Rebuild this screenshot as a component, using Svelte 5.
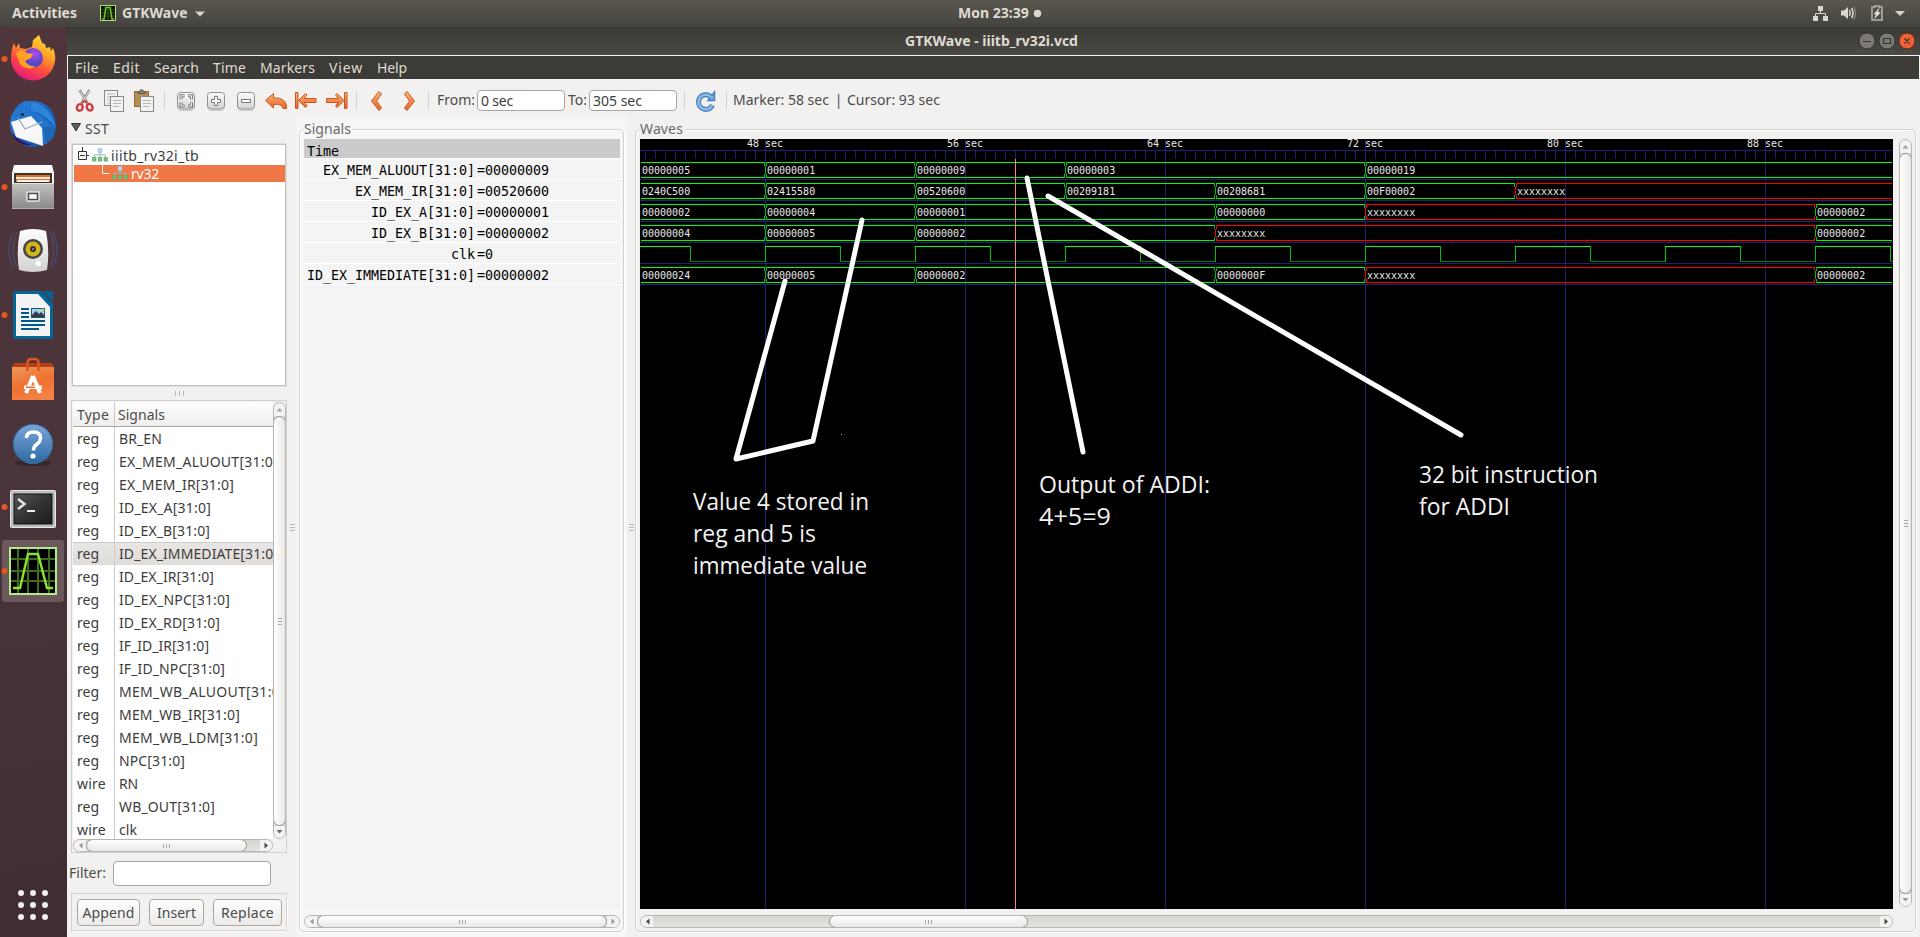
<script>
  function fit(node, width) {
    const natural = node.getBoundingClientRect().width;
    const n = Math.max(1, node.textContent.length);
    node.style.letterSpacing = (width - natural) / n + 'px';
  }

  const menus = [['File', 24], ['Edit', 27], ['Search', 45], ['Time', 33], ['Markers', 55], ['View', 34], ['Help', 30]];

  const rows = [
    ['reg', 'BR_EN', 43], ['reg', 'EX_MEM_ALUOUT[31:0]', 159], ['reg', 'EX_MEM_IR[31:0]', 115],
    ['reg', 'ID_EX_A[31:0]', 92], ['reg', 'ID_EX_B[31:0]', 91], ['reg', 'ID_EX_IMMEDIATE[31:0]', 159],
    ['reg', 'ID_EX_IR[31:0]', 95], ['reg', 'ID_EX_NPC[31:0]', 111], ['reg', 'ID_EX_RD[31:0]', 101],
    ['reg', 'IF_ID_IR[31:0]', 90], ['reg', 'IF_ID_NPC[31:0]', 106], ['reg', 'MEM_WB_ALUOUT[31:0]', 166],
    ['reg', 'MEM_WB_IR[31:0]', 121], ['reg', 'MEM_WB_LDM[31:0]', 139], ['reg', 'NPC[31:0]', 66],
    ['wire', 'RN', 19], ['reg', 'WB_OUT[31:0]', 96], ['wire', 'clk', 18]
  ];

  const signals = [
    ['EX_MEM_ALUOUT[31:0]', '00000009'], ['EX_MEM_IR[31:0]', '00520600'], ['ID_EX_A[31:0]', '00000001'],
    ['ID_EX_B[31:0]', '00000002'], ['clk', '0'], ['ID_EX_IMMEDIATE[31:0]', '00000002']
  ];

  // Each bus: top of its lane and [start, value] pairs.
  const X = 'xxxxxxxx';
  const buses = [
    { y: 162, v: [[640, '00000005'], [765, '00000001'], [915, '00000009'], [1065, '00000003'], [1365, '00000019']] },
    { y: 183, v: [[640, '0240C500'], [765, '02415580'], [915, '00520600'], [1065, '00209181'], [1215, '00208681'], [1365, '00F00002'], [1515, X]] },
    { y: 204, v: [[640, '00000002'], [765, '00000004'], [915, '00000001'], [1215, '00000000'], [1365, X], [1815, '00000002']] },
    { y: 225, v: [[640, '00000004'], [765, '00000005'], [915, '00000002'], [1215, X], [1815, '00000002']] },
    { y: 267, v: [[640, '00000024'], [765, '00000005'], [915, '00000002'], [1215, '0000000F'], [1365, X], [1815, '00000002']] }
  ];
  const segs = buses.flatMap((b) =>
    b.v.map(([x, t], i) => ({
      x, t, y: b.y, first: i === 0, last: i === b.v.length - 1,
      end: i === b.v.length - 1 ? 1892 : b.v[i + 1][0] - 1,
      c: t === X ? '#ff0000' : '#00ff00', d: t === X ? '#ff0000' : '#00c000'
    }))
  );
  const ticks = Array.from({ length: 125 }, (_, i) => 645 + i * 10);
  const majors = [[765, 48], [965, 56], [1165, 64], [1365, 72], [1565, 80], [1765, 88]];
  const edges = Array.from({ length: 17 }, (_, i) => 690 + i * 75);
  const notes = [
    [693, 510, 176, 'Value 4 stored in'], [693, 542, 123, 'reg and 5 is'], [693, 574, 174, 'immediate value'],
    [1039, 493, 171, 'Output of ADDI:'], [1039, 525, 72, '4+5=9'],
    [1419, 483, 179, '32 bit instruction'], [1419, 515, 91, 'for ADDI']
  ];
</script>

{#snippet hbar(start, size, total, la, ra)}
  <div class="hbar" style:width="{total}px">
    <svg class="arr" width="12" height="13"><path d="M8.5 3.5v6L5 6.5z" fill={la} /></svg>
    <div class="thumb" style:margin-left="{start - 13}px" style:width="{size}px"><i></i><i></i><i></i></div>
    <svg class="arr end" width="12" height="13"><path d="M4.500 3.500v6l3.500-3z" fill={ra} /></svg>
  </div>
{/snippet}

{#snippet vbar(size, total, da)}
  <div class="vbar" style:height="{total}px">
    <svg class="arr" width="11" height="13"><path d="M2.5 8.5h6L5.500 5z" fill="#a5a3a0" /></svg>
    <div class="vthumb" style:height="{size}px"><i></i><i></i><i></i></div>
    <svg class="arr end" width="11" height="12"><path d="M2.500 4h6L5.500 7.500z" fill={da} /></svg>
  </div>
{/snippet}

{#snippet hier()}
  <svg width="16" height="14" viewBox="0 0 16 14">
    <path d="M8 4v3M2.500 9V6.800h11V9M8 7v2" fill="none" stroke="#a9b5bd" />
    <rect x="6" y="0.500" width="4" height="4" fill="#b9d7f6" stroke="#93bae2" stroke-width=".6" />
    <g fill="#74c077" stroke="#57ab5b" stroke-width=".6"><rect x=".4" y="9.500" width="3.600" height="3.600" /><rect x="6.200" y="9.500" width="3.600" height="3.600" /><rect x="12" y="9.500" width="3.600" height="3.600" /></g>
  </svg>
{/snippet}

<div class="screen">
  <svg class="defs" width="0" height="0">
    <defs>
      <linearGradient id="or" x1="0" y1="0" x2="0" y2="1"><stop offset="0" stop-color="#f9b873" /><stop offset="1" stop-color="#e8622a" /></linearGradient>
      <linearGradient id="ff" x1=".8" y1="0" x2=".3" y2="1"><stop offset="0" stop-color="#ffe23c" /><stop offset=".35" stop-color="#ffa526" /><stop offset=".65" stop-color="#ff4f3c" /><stop offset="1" stop-color="#e5157f" /></linearGradient>
      <radialGradient id="pu" cx=".6" cy=".3"><stop offset="0" stop-color="#b04df0" /><stop offset="1" stop-color="#5546c4" /></radialGradient>
      <linearGradient id="tb" x1="0" y1="0" x2="1" y2="1"><stop offset="0" stop-color="#2f8fe0" /><stop offset=".5" stop-color="#1d5fc0" /><stop offset="1" stop-color="#164c95" /></linearGradient>
      <linearGradient id="gr" x1="0" y1="0" x2="0" y2="1"><stop offset="0" stop-color="#c2c2c0" /><stop offset="1" stop-color="#8a8a88" /></linearGradient>
      <linearGradient id="wh" x1="0" y1="0" x2="0" y2="1"><stop offset="0" stop-color="#fdfdfd" /><stop offset="1" stop-color="#d3d2d0" /></linearGradient>
      <linearGradient id="bag" x1="0" y1="0" x2=".4" y2="1"><stop offset="0" stop-color="#e9985a" /><stop offset=".6" stop-color="#f0702f" /><stop offset="1" stop-color="#f38145" /></linearGradient>
      <linearGradient id="hp" x1="0" y1="0" x2="0" y2="1"><stop offset="0" stop-color="#7ba5dd" /><stop offset="1" stop-color="#2c6aa0" /></linearGradient>
      <linearGradient id="tm" x1="0" y1="0" x2="1" y2="1"><stop offset="0" stop-color="#555" /><stop offset=".5" stop-color="#333" /><stop offset="1" stop-color="#1c1c1c" /></linearGradient>
    </defs>
  </svg>

  <header class="top">
    <b class="act" use:fit={68}>Activities</b>
    <svg class="mini" width="16" height="16" viewBox="0 0 16 16"><rect x=".5" y=".5" width="15" height="15" fill="#0c1204" stroke="#a5dd78" /><path d="M5 1v14M8 1v14M11 1v14M1 5h14M1 8h14M1 11h14" stroke="#33591a" /><path d="M2 14h2L6 2.500h4L12 14h2" fill="none" stroke="#74c42c" stroke-width="1.400" /></svg>
    <b class="app" use:fit={67}>GTKWave</b>
    <svg class="dn" width="10" height="6"><path d="M0 .5h10L5 5.500z" fill="#d5d3cd" /></svg>
    <b class="clock" use:fit={73}>Mon 23:39</b>
    <svg width="9" height="9" class="dot"><circle cx="4.500" cy="4.500" r="3.700" fill="#dbd9d4" /></svg>
    <svg class="tray" width="100" height="27" viewBox="1810 0 100 27">
      <path d="M1818 6h5v5h-5zM1813 16h5v5h-5zM1823 16h5v5h-5z" fill="#d9d7d2" /><path d="M1820.500 11v2.500M1815.500 16v-2.500h10V16" fill="none" stroke="#d9d7d2" />
      <path d="M1841 10.500h3l4-3.500v12l-4-3.500h-3z" fill="#d9d7d2" /><path d="M1849.500 10q1.500 3 0 6M1851.500 8q3 5 0 10" fill="none" stroke="#d9d7d2" stroke-width="1.500" /><path d="M1853.500 6.500q4 6.500 0 13" fill="none" stroke="#85827a" stroke-width="1.300" />
      <path d="M1872 7h3V6h4v1h3v13h-10z" fill="none" stroke="#9c9a94" stroke-width="2" /><path d="M1879 8.500l-5 5.500h2.500l-2 4.500 6-6h-3z" fill="#e2e0db" stroke="#e2e0db" stroke-width=".6" />
      <path d="M1895 11h10l-5 5z" fill="#d5d3cd" />
    </svg>
  </header>

  <nav class="dock">
    <svg viewBox="0 0 67 64"><circle cx="4.500" cy="32" r="3" fill="#e95420" />
      <path d="M14 16l2 5 3-5 1 5 6 1 6-2 1-7 6-5 3 8 3 1 1 4 4-1 1 4 2-3q4 9 1 17A22 22 0 0 1 11 32Q11 22 14 16z" fill="url(#ff)" />
      <circle cx="33" cy="31" r="10" fill="url(#pu)" /><path d="M16 26q6-4 11 0l6 1-2 4-6 3q3 6 11 5-8 6-16-2z" fill="#ffa127" /></svg>
    <svg viewBox="0 0 67 64"><circle cx="33" cy="33" r="23" fill="url(#tb)" />
      <path d="M13 22Q20 8 30 10q-9 3-8 11 20-2 33 18-2 12-12 15L20 46z" fill="#2476cc" /><path d="M32 11q20 4 24 27-9-15-26-19z" fill="#2c86d8" />
      <path d="M11 31l20-6 11 12 1 18-27-9z" fill="#f7f7f8" /><path d="M18 27l7 11 17-7" fill="none" stroke="#9eabc0" stroke-width="1.300" /><path d="M43 36l3 17 8-7 2-10z" fill="#1c67b6" /><path d="M12 42q7 9 20 12-16 1-20-12z" fill="#29125c" /><circle cx="22.500" cy="23.500" r="1.500" fill="#123" /></svg>
    <svg viewBox="0 0 67 64"><circle cx="4.500" cy="32" r="3" fill="#e95420" />
      <path d="M14 10h38l2 8v36H12V18z" fill="url(#wh)" /><path d="M14 18h38v10H14z" fill="#3b3532" /><path d="M16 20h34v7H16z" fill="#e46b21" /><path d="M16 22h34v2H16zM17 25h32v2H17z" fill="#f6efe6" /><rect x="12" y="28" width="42" height="25.500" rx="1" fill="url(#gr)" /><path d="M12 28.500h42" stroke="#e2e2e2" /><rect x="26" y="36" width="14" height="11" rx="2" fill="#d8d8d6" /><rect x="28.500" y="38.500" width="9" height="6" fill="#fafafa" stroke="#4d4d4d" stroke-width="1.500" /></svg>
    <svg viewBox="0 0 67 64"><path d="M13 13Q5 32 13 48M17 13Q9 32 17 48M53 13Q61 32 53 48M50 12Q57 32 50 48" fill="none" stroke="#48496e" stroke-width="1.400" />
      <path d="M20 12q13-4 26 0 4 20 1 39-14 4-28 0-3-20 1-39z" fill="url(#wh)" /><circle cx="33" cy="30" r="10" fill="#45454a" /><circle cx="33" cy="30" r="7.500" fill="#d5b516" /><circle cx="33" cy="30" r="3" fill="#343438" /><circle cx="33" cy="30" r="1" fill="#999" /><circle cx="39" cy="45" r="3.500" fill="#c9c8c5" /><circle cx="38.500" cy="44.500" r="3" fill="#fff" /></svg>
    <svg viewBox="0 0 67 64"><circle cx="4.500" cy="32" r="3" fill="#e95420" />
      <path d="M15 8h26l12 13v33a2 2 0 0 1-2 2H15a2 2 0 0 1-2-2V10a2 2 0 0 1 2-2z" fill="#05669a" /><path d="M42 8h11v11z" fill="#0b5f92" /><path d="M16 11h22l12 13v29H16z" fill="#f3f3f3" /><path d="M21 27h8M21 31h8M21 35h8M21 39h24M21 43h24M21 47h18" transform="translate(0 -1)" stroke="#04568a" stroke-width="2" /><rect x="31.500" y="25.500" width="13" height="9" fill="#a6d0ee" stroke="#075b8c" /><path d="M32 34v-2l4-4 3 3 2-2 3 3v2z" fill="#383d42" /><circle cx="43" cy="27" r="1.500" fill="#ebc64b" /></svg>
    <svg viewBox="0 0 67 64"><path d="M14 16h38l2 5H12z" fill="#b73e12" /><path d="M12 20h42v33H12z" fill="url(#bag)" /><path d="M27.500 24v-8q0-4 4-4h3q4 0 4 4v8" fill="none" stroke="#e4551e" stroke-width="2.500" />
      <path d="M33 29l-7 17M33 29l7 17" stroke="#fff" stroke-width="4" /><path d="M24 38.500h18v3.500H24z" fill="#fff" /><path d="M26 40.200h9" stroke="#e85b23" stroke-width="1.300" /></svg>
    <svg viewBox="0 0 67 64"><ellipse cx="33" cy="52" rx="18" ry="3" fill="#35262b" /><circle cx="33" cy="33" r="19.700" fill="url(#hp)" stroke="#34699a" /><path d="M26.500 27q0-6 7-6t7 6q0 4-4 6.500-3 2-3 6" fill="none" stroke="#fff" stroke-width="3.400" /><circle cx="33" cy="45" r="2.600" fill="#fff" /></svg>
    <svg viewBox="0 0 67 64"><circle cx="4.500" cy="32" r="3" fill="#e95420" /><rect x="10.500" y="15.500" width="45" height="37" rx="1" fill="#bdbdbb" stroke="#e8e8e8" /><rect x="14" y="19" width="38" height="30" fill="url(#tm)" stroke="#101010" /><path d="M18 24l6.500 5-6.500 5" fill="none" stroke="#e4e4e4" stroke-width="2.400" /><path d="M27 36h8" stroke="#f0f0f0" stroke-width="2" /></svg>
    <svg viewBox="0 0 67 64"><rect x="2" y="1" width="62" height="62" rx="3" fill="#6b585d" /><circle cx="4.500" cy="32" r="3" fill="#e95420" /><rect x="10" y="9" width="46" height="46" fill="#000" stroke="#b5e986" stroke-width="2" /><path d="M18 10v44M28 10v44M38 10v44M49 10v44M11 20h44M11 32h44M11 42h44" stroke="#3f6b1d" stroke-width="2" /><path d="M13 49h7l8-34h10l9 34h6" fill="none" stroke="#8ae234" stroke-width="2.400" /></svg>
    <svg class="apps" viewBox="0 0 67 64" fill="#f2f1f0">
      {#each [21, 33, 45] as x}{#each [20, 32, 44] as y}<circle cx={x} cy={y} r="3" />{/each}{/each}
    </svg>
  </nav>

  <main class="win">
    <div class="title">
      <b use:fit={176}>GTKWave - iiitb_rv32i.vcd</b>
      <svg class="wbtn" width="60" height="20" viewBox="0 0 60 20">
        <circle cx="10" cy="10" r="8" fill="#7c7a73" stroke="#33322e" /><circle cx="30" cy="10" r="8" fill="#7c7a73" stroke="#33322e" /><circle cx="50" cy="10" r="8" fill="#ee6137" stroke="#58281a" />
        <path d="M6 10.500h8M26.500 7.500h7v5h-7zM47.500 7.500l5 5M52.500 7.500l-5 5" fill="none" stroke="#33322e" stroke-width="1.200" />
      </svg>
    </div>
    <div class="menu">{#each menus as [m, w]}<span use:fit={w}>{m}</span>{/each}</div>

    <div class="tools">
      <svg width="368" height="39" viewBox="67 79 368 39" fill="none">
        <path d="M79.500 90l8 13M89.500 90l-8 13" stroke="#8d8d8a" stroke-width="2.600" /><path d="M79.500 90.500l7.500 12M89.500 90.500l-7.500 12" stroke="#e3e3e0" stroke-width="1" /><ellipse cx="80" cy="107.500" rx="2.800" ry="3.400" stroke="#cc3c3c" stroke-width="2.400" transform="rotate(25 80 107)" /><ellipse cx="89.500" cy="107.500" rx="2.800" ry="3.400" stroke="#cc3c3c" stroke-width="2.400" transform="rotate(-25 89 107)" /><path d="M82 103l2.500-2 2.500 2" stroke="#cc3c3c" stroke-width="2" />
        <g stroke="#888a85"><rect x="104.500" y="90.500" width="13" height="15" fill="#f2f2f0" /><path d="M107 94h8M107 97h6M107 100h3M107 103h3" stroke="#b5b6b2" /><rect x="110.500" y="96.500" width="13" height="15" fill="#f2f2f0" /><path d="M113 100.500h8M113 103.500h8M113 106.500h6" stroke="#b5b6b2" /></g>
        <rect x="134.500" y="91.500" width="14" height="15" fill="#b38d52" stroke="#8e6c3b" /><path d="M138 93.500v-1.500h2v-2h3v2h2v1.500z" fill="#888" stroke="#5c5c58" /><g stroke="#888a85"><rect x="140.500" y="96.500" width="13" height="15" fill="#f2f2f0" /><path d="M143 100.500h8M143 103.500h8M143 106.500h6" stroke="#b5b6b2" /></g>
        <path d="M164.500 91v19M356.500 91v19M428.500 91v19" stroke="#d6d4d0" />
        {#each [177, 207, 237] as x}<rect x={x + 0.5} y="92.500" width="17" height="16.500" rx="3" fill="url(#wh)" stroke="#8f918c" /><path d="M{x + 2} 110.500h14" stroke="#c9c8c5" />{/each}
        <path d="M184.500 95.800h-3.500v3.500M188 95.800h3.500v3.500M184.500 106h-3.500v-3.500M188 106h3.500v-3.500" stroke="#777975" stroke-width="3" /><path d="M184 95.800h-3v3M188.500 95.800h3v3M184 106h-3v-3M188.500 106h3v-3" stroke="#fff" stroke-width="1" />
        <path d="M214.500 96.500h3v3h3v3h-3v3h-3v-3h-3v-3h3zM241.500 99.500h9v3h-9z" fill="#fff" stroke="#777975" />
        <g fill="url(#or)" stroke="#cf5520" stroke-linejoin="round"><path d="M265.500 100.500l8-7v4.500q11-1 13 7.500v3h-3.500q-1-5-9.500-4v3.500z" />
          <path d="M295.500 92.500h2.500v16h-2.500zM298.500 100.500l7-7 1.500 1.500-3 3.500h12v4h-12l3 3-1.500 2z" /><path d="M346.500 92.500h-2.500v16h2.500zM343.500 100.500l-7-7-1.500 1.500 3 3.500h-12v4h12l-3 3 1.500 2z" transform="translate(.5 0)" />
          <path d="M379 91.500l2.500 2.500-5 7 5 7-2.500 2.500-7.500-9.500z" /><path d="M407 91.500l-2.500 2.500 5 7-5 7 2.500 2.500 7.500-9.500z" /></g>
      </svg>
      <span class="from" use:fit={39}>From:</span>
      <div class="entry e1"><span use:fit={32}>0 sec</span></div>
      <span class="to" use:fit={19}>To:</span>
      <div class="entry e2"><span use:fit={49}>305 sec</span></div>
      <svg width="55" height="39" viewBox="678 79 55 39" fill="none"><path d="M684.500 91v19M726.500 91v19" stroke="#d6d4d0" /><path d="M711.500 97.500a7.300 7.300 0 1 0 1 7.500" stroke="#4480bd" stroke-width="5" /><path d="M708 100.500h6.500v-8.500z" fill="#75a8da" stroke="#4480bd" stroke-width="1.500" /><path d="M711.500 97.500a7.300 7.300 0 1 0 1 7.500" stroke="#8dbae6" stroke-width="2.600" /></svg>
      <span class="mk1" use:fit={97}>Marker: 58 sec</span><span class="bar">|</span><span use:fit={93}>Cursor: 93 sec</span>
    </div>

    <div class="body">
      <section class="left">
        <div class="sst"><svg width="12" height="25"><path d="M0.500 5.500h9L5 13z" fill="#606060" stroke="#33332f" /></svg><span use:fit={24}>SST</span></div>
        <div class="tree">
          <div class="node"><svg width="15" height="19" viewBox="74 146 15 19" fill="none"><path d="M82.500 147v4M78.500 151.500h8v8h-8zM80 155.500h5M87 155.500h2" stroke="#333" /></svg><span class="ic">{@render hier()}</span><span use:fit={88}>iiitb_rv32i_tb</span></div>
          <div class="node sel"><svg width="15" height="17" viewBox="0 0 15 17" fill="none"><path d="M8.500 0v8.500H15" stroke="#fff" /></svg><span class="ic2">{@render hier()}</span><span use:fit={28}>rv32</span></div>
        </div>
        <div class="grip"><i></i><i></i><i></i></div>
        <div class="table">
          <div class="grid">
            <div class="hd"><span class="c1"><span use:fit={32}>Type</span></span><span class="c2 h"><span use:fit={47}>Signals</span></span></div>
            <div class="rws">
              {#each rows as [k, n, w], i}
                <div class="rw" class:on={i === 5}><span class="c1"><span use:fit={k === 'reg' ? 22 : 29}>{k}</span></span><span class="c2"><span use:fit={w}>{n}</span></span></div>
              {/each}
            </div>
          </div>
          {@render vbar(410, 437, '#666')}
          {@render hbar(13, 161, 200, '#999', '#444')}
        </div>
        <div class="filter"><span use:fit={40}>Filter:</span><div class="entry fe"></div></div>
        <div class="btns">
          <button style:width="63px"><span use:fit={52}>Append</span></button>
          <button style:width="55px"><span use:fit={39}>Insert</span></button>
          <button style:width="69px"><span use:fit={53}>Replace</span></button>
        </div>
      </section>
      <div class="vgrip"><i></i><i></i><i></i></div>

      <section class="sigs">
        <div class="frame">
          <div class="lab"><span use:fit={47}>Signals</span></div>
          <div class="list">
            <div class="time">Time</div>
            {#each signals as [n, v]}<div class="sg"><span>{n}</span><span class="v">={v}</span></div>{/each}
          </div>
          {@render hbar(13, 290, 316, '#999', '#999')}
        </div>
      </section>
      <div class="vgrip g2"><i></i><i></i><i></i></div>

      <section class="waves">
        <div class="frame wf">
          <div class="lab wl"><span use:fit={43}>Waves</span></div>
          <div class="wrow">
            <svg class="wave" width="1253" height="770" viewBox="640 139 1253 770">
              <rect x="640" y="139" width="1253" height="770" fill="#000" />
              <g shape-rendering="crispEdges">
                <g fill="#202070">
                  <rect x="640" y="150" width="1253" height="1" />
                  {#each ticks as x}<rect {x} y="151" width="1" height="8" />{/each}
                  {#each majors as [x]}<rect {x} y="139" width="1" height="770" />{/each}
                  {#each [179, 200, 221, 242, 263, 284] as y}<rect x="640" {y} width="1253" height="1" />{/each}
                </g>
                {#each segs as s}
                  <rect x={s.first ? 641 : s.x + 2} y={s.y} width={s.end - (s.first ? 641 : s.x + 2)} height="1" fill={s.c} />
                  <rect x={s.first ? 641 : s.x + 2} y={s.y + 15} width={s.end - (s.first ? 641 : s.x + 2)} height="1" fill={s.c} />
                  {#if !s.first}
                    <path d="M{s.x + 1} {s.y}h1v4h-1zM{s.x + 1} {s.y + 12}h1v4h-1zM{s.x} {s.y + 4}h1v8h-1z" fill={s.d} />
                  {/if}
                  {#if !s.last}
                    <path d="M{s.end} {s.y}h1v4h-1zM{s.end} {s.y + 12}h1v4h-1z" fill={s.d} />
                  {/if}
                {/each}
                <rect x="640" y="246" width="50" height="1" fill="#00ff00" />
                {#each edges as x, i}
                  <rect {x} y="246" width="1" height="16" fill="#00c000" />
                  <rect {x} y={i % 2 ? 246 : 261} width={Math.min(75, 1893 - x)} height="1" fill={i % 2 ? '#00ff00' : '#008000'} />
                {/each}
                <rect x="1015" y="159" width="1" height="750" fill="#ff8080" />
              </g>
              <g font-family="DejaVu Sans Mono" font-size="10" fill="#e8e8e8">
                {#each majors as [x, t]}<text x={x - 18} y="147">{t} sec</text>{/each}
                {#each segs as s}<text x={s.x + 2} y={s.y + 12}>{s.t}</text>{/each}
              </g>
              <g stroke="#fff" stroke-width="5" fill="none" stroke-linecap="round" stroke-linejoin="round">
                <path d="M785 281L736 459 813 441 862 220M1027 178L1083 452M1048 196L1461 435" />
              </g>
              <rect x="841" y="434" width="1" height="1" fill="#999" />
              <g font-family="Open Sans, Noto Sans, sans-serif" font-size="23" fill="#f2f2f2">
                {#each notes as [x, y, w, t]}<text {x} {y} textLength={w} lengthAdjust="spacingAndGlyphs">{t}</text>{/each}
              </g>
            </svg>
            {@render vbar(741, 768, '#999')}
          </div>
          {@render hbar(189, 199, 1253, '#444', '#444')}
        </div>
      </section>
    </div>
  </main>
</div>

<style>
  :global(body) { margin: 0; overflow: hidden; }
  .screen { width: 1920px; height: 937px; display: grid; grid-template: 27px 910px / 67px 1853px; font: 14px/20px "Noto Sans", "Open Sans", sans-serif; color: #4c4c4c; background: #f2f1f0; overflow: hidden; }
  .defs { position: absolute; }
  span, b { white-space: pre; display: inline-block; flex: none; }
  svg { display: block; flex: none; }
  .top { grid-column: 1 / 3; display: flex; align-items: center; background: linear-gradient(#5a574f, #44433e); color: #dfdbd2; }
  .top b { padding-bottom: 2px; }
  .act { margin-left: 12px; width: 68px; }
  .mini { margin: 0 6px 2px 20px; }
  .app { width: 67px; }
  .dn { margin-left: 6px; }
  .clock { margin-left: 753px; width: 73px; }
  .dot { margin-left: 2px; }
  .tray { margin-left: auto; margin-right: 10px; }
  .dock { background: linear-gradient(170deg, #50353b, #49343a 50%, #402d32); display: flex; flex-direction: column; }
  .dock svg { width: 67px; height: 64px; }
  .dock .apps { margin-top: auto; margin-bottom: 0; }
  .win { display: flex; flex-direction: column; }
  .title { height: 28px; background: linear-gradient(#3a3934, #4b4a45); border-bottom: 1px solid #f5f4f2; display: flex; align-items: center; color: #dfdbd2; }
  .title b { margin-left: 838px; width: 176px; }
  .wbtn { margin-left: auto; margin-right: 3px; }
  .menu { height: 23px; margin: 0 1px; background: #3c3b37; color: #dfdbd2; display: flex; gap: 14px; padding-left: 7px; align-items: center; }
  .tools { height: 39px; display: flex; align-items: flex-start; }
  .tools > span { margin-top: 11px; }
  .from { margin-left: 2px; width: 39px; }
  .entry { box-sizing: border-box; background: #fff; border: 1px solid #aaa69f; border-radius: 4px; height: 21px; flex: none; }
  .entry span { margin-left: 3px; color: #3c3c3c; }
  .e1 { margin: 11px 3px 0 1px; width: 88px; }
  .to { width: 19px; }
  .e2 { margin: 11px 1px 0 2px; width: 88px; }
  .mk1 { width: 97px; }
  .bar { width: 17px; text-align: center; }
  .body { flex: 1; display: flex; }
  .body > * { flex-shrink: 0; }
  .left { width: 216px; margin-left: 4px; display: flex; flex-direction: column; }
  .sst { height: 25px; display: flex; }
  .sst span { margin: 1px 0 0 2px; }
  .tree { box-sizing: border-box; height: 244px; background: #fff; border: 2px solid #c4c2be; outline: 1px solid #e0deda; outline-offset: -1px; padding-top: 1px; }
  .node { display: flex; height: 19px; color: #3c3c3c; align-items: flex-start; padding-left: 1px; }
  .node > span { line-height: 19px; }
  .node .ic { margin: 2px 3px 0 3px; }
  .sel { background: #f07746; color: #fff; height: 17px; margin-left: 1px; }
  .sel > svg { margin-left: 19px; }
  .sel > span { line-height: 17px; }
  .sel .ic2 { margin: 1px 3px 0 3px; }
  .grip { height: 13px; display: flex; gap: 3px; justify-content: center; align-items: center; }
  .grip i { width: 1px; height: 5px; background: #bbb8b3; }
  .vgrip { width: 14px; display: flex; flex-direction: column; gap: 2px; justify-content: center; align-items: center; }
  .body > .vgrip { width: 10px; }
  .vgrip i { width: 5px; height: 1px; background: #bbb8b3; }
  .table { box-sizing: border-box; height: 453px; border: 1px solid #d2d0cc; display: grid; grid-template: 437px 13px / 200px 13px; padding: 1px 0 0 1px; background: #f2f1f0; }
  .grid { overflow: hidden; background: #fff; }
  .hd { height: 24px; display: flex; background: linear-gradient(#fdfdfd, #efeeec); border-bottom: 1px solid #a9a6a1; line-height: 25px; }
  .c1 { width: 42px; box-sizing: border-box; padding-left: 4px; border-right: 1px solid #cecbc7; }
  .c2 { padding-left: 4px; }
  .h { padding-left: 3px; }
  .rw { height: 23px; display: flex; line-height: 23px; color: #3c3c3c; }
  .on { background: linear-gradient(#e9e7e5, #dedbd8); box-shadow: inset 0 1px #cfccc8; }
  .hbar { height: 13px; box-sizing: border-box; display: flex; background: linear-gradient(#d7d5d2, #e3e2df); border: 1px solid #b7b5b0; border-radius: 7px; overflow: hidden; }
  .arr { background: #f4f3f2; margin-top: -1px; }
  .end { margin-left: auto; }
  .thumb, .vthumb { box-sizing: border-box; background: linear-gradient(#fefefe, #e9e8e5); border: 1px solid #96938d; border-radius: 7px; margin-top: -1px; height: 13px; display: flex; gap: 2px; justify-content: center; align-items: center; flex: none; }
  .thumb i { width: 1px; height: 4px; background: #aaa7a2; }
  .vbar { width: 13px; box-sizing: border-box; display: flex; flex-direction: column; border: 1px solid #b7b5b0; border-radius: 7px; background: #dcdad7; overflow: hidden; }
  .vbar .arr { margin: 0; }
  .vbar .end { margin-top: auto; }
  .vthumb { background: linear-gradient(90deg, #fefefe, #e9e8e5); width: 13px; margin: 0 -1px; flex-direction: column; }
  .vthumb i { width: 4px; height: 1px; background: #aaa7a2; }
  .filter { height: 40px; display: flex; align-items: flex-start; margin-left: -2px; }
  .filter span { width: 40px; margin-top: 10px; }
  .fe { width: 158px; height: 25px; margin: 8px 0 0 4px; }
  .btns { height: 38px; box-sizing: border-box; border: 1px solid #d5d3cf; box-shadow: 1px 1px #fafafa; display: flex; gap: 9px; padding: 5px 0 0 5px; }
  button { box-sizing: border-box; height: 27px; padding: 0; font: inherit; color: #4c4c4c; border: 1px solid #aaa7a1; border-radius: 4px; background: linear-gradient(#fefefe, #ebeae8); display: flex; justify-content: center; align-items: center; }
  .sigs { width: 330px; box-sizing: border-box; background: #f6f6f6; padding: 11px 3px 5px 2px; }
  .frame { box-sizing: border-box; height: 803px; border: 1px solid #d3d1cd; box-shadow: inset 1px 1px #fff, 1px 1px #fff; border-radius: 5px; padding: 0 4px; }
  .wf { padding: 0 3px 0 4px; }
  .lab { height: 20px; margin-top: -11px; width: 48px; background: #f6f6f6; color: #686868; }
  .wl { background: #f2f1f0; width: 45px; }
  .list { width: 316px; height: 770px; margin-bottom: 6px; background: #f4f4f4; color: #000; font: 13.33px/19px "DejaVu Sans Mono", monospace; letter-spacing: -0.03px; }
  .time { box-sizing: border-box; height: 20px; padding: 3px 0 0 3px; background: #cbcbcb; border-bottom: 1px solid #fff; }
  .sg { height: 20px; border-bottom: 1px solid #fff; display: flex; line-height: 24px; }
  .sg span:first-child { width: 171px; text-align: right; }
  .v { margin-left: 2px; }
  .waves { width: 1281px; padding-top: 11px; }
  .body > .g2 { width: 8px; }
  .wrow { display: flex; height: 770px; margin-bottom: 6px; gap: 6px; }
</style>
